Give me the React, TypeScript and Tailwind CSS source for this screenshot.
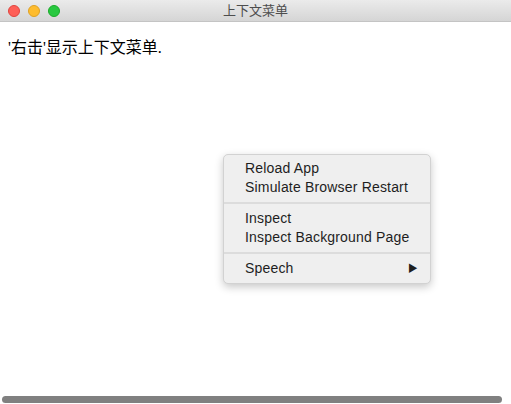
import { useState } from "react";

const cjkSans = "font-['Helvetica_Neue','Liberation_Sans','Noto_Sans_CJK_SC',sans-serif]";

type MenuEntry = { label: string; submenu?: boolean } | "sep";

const menu: MenuEntry[] = [
  { label: "Reload App" },
  { label: "Simulate Browser Restart" },
  "sep",
  { label: "Inspect" },
  { label: "Inspect Background Page" },
  "sep",
  { label: "Speech", submenu: true },
];

function TitleBar() {
  return (
    <div className="relative flex h-[22px] shrink-0 items-center border-b border-[#c4c4c4] bg-gradient-to-b from-[#ebebeb] to-[#d5d5d5]">
      <div className="flex items-center gap-[8px] pl-[8px]">
        <span className="h-[12px] w-[12px] rounded-full border border-[#e0443e] bg-[#fe5f57]" />
        <span className="h-[12px] w-[12px] rounded-full border border-[#dea123] bg-[#febc2e]" />
        <span className="h-[12px] w-[12px] rounded-full border border-[#1aab29] bg-[#28c840]" />
      </div>
      <div
        className={`absolute inset-x-0 top-0 flex h-[21px] items-center justify-center text-[13px] text-[#4d4d4d] ${cjkSans}`}
      >
        上下文菜单
      </div>
    </div>
  );
}

function ContextMenu() {
  const [hover, setHover] = useState<number | null>(null);
  return (
    <div className="absolute left-[223px] top-[132px] w-[208px] rounded-[5px] border border-[#d2d2d2] bg-[#efefef] pb-[5px] pt-[4px] shadow-[0_3px_8px_rgba(0,0,0,0.22)]">
      {menu.map((entry, i) =>
        entry === "sep" ? (
          <div key={i} className="my-[5px] h-[2px] bg-[#dcdcdc]" />
        ) : (
          <div
            key={i}
            onMouseEnter={() => setHover(i)}
            onMouseLeave={() => setHover(null)}
            className={`flex h-[19px] items-center justify-between pl-[21px] pr-[12px] text-[14px] tracking-[0.18px] ${cjkSans} ${
              hover === i ? "bg-[#3f87f5] text-white" : "text-[#1e1e1e]"
            }`}
          >
            <span>{entry.label}</span>
            {entry.submenu && <span className="text-[10px] leading-none">▶</span>}
          </div>
        )
      )}
    </div>
  );
}

export default function App() {
  return (
    <div className="flex h-[404px] w-[511px] flex-col overflow-hidden bg-white">
      <TitleBar />
      <div className="relative flex-1">
        <p className="mt-[16px] pl-[8px] text-[16px] leading-[20px] text-black font-['Liberation_Serif','Noto_Sans_CJK_SC',serif]">
          '右击'显示上下文菜单.
        </p>
        <ContextMenu />
      </div>
      <div className="mb-[1px] ml-[2px] h-[7px] w-[500px] shrink-0 rounded-full bg-[#808080]" />
    </div>
  );
}
